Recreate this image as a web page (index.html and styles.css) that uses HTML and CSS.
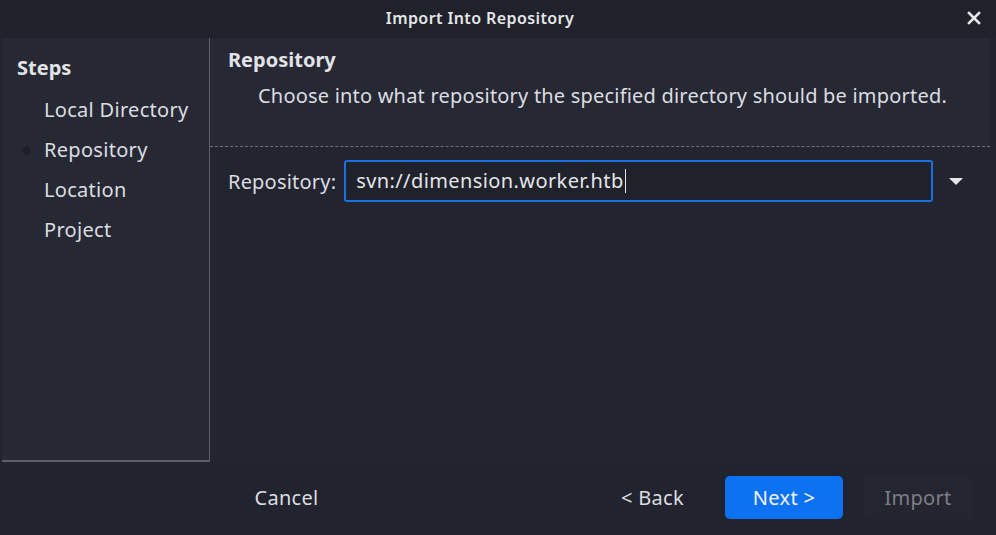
FILE: index.html
```html
<!DOCTYPE html>
<html>
<head>
<meta charset="utf-8">
<link rel="stylesheet" href="styles.css">
</head>
<body>
<div class="window">
  <div class="titlebar">
    <span class="title">Import Into Repository</span>
    <span class="close">
      <svg width="14" height="14" viewBox="0 0 14 14"><path d="M2 2 L12 12 M12 2 L2 12" stroke="#e8e8e8" stroke-width="2.6" stroke-linecap="square"/></svg>
    </span>
  </div>
  <div class="main">
    <div class="sidebar">
      <div class="steps-title">Steps</div>
      <ul class="steps">
        <li>Local Directory</li>
        <li class="current">Repository</li>
        <li>Location</li>
        <li>Project</li>
      </ul>
    </div>
    <div class="panel">
      <div class="panel-head">
        <div class="panel-title">Repository</div>
        <div class="panel-desc">Choose into what repository the specified directory should be imported.</div>
      </div>
      <div class="panel-body">
        <div class="row">
          <label class="label">Repository:</label>
          <div class="input">svn://dimension.worker.htb<span class="caret"></span></div>
          <span class="drop">
            <svg width="14" height="8" viewBox="0 0 14 8"><path d="M0 0 H14 L7 7 Z" fill="#e6e6e6"/></svg>
          </span>
        </div>
      </div>
    </div>
  </div>
  <div class="buttons">
    <button class="btn cancel">Cancel</button>
    <div class="spacer"></div>
    <button class="btn back">&lt; Back</button>
    <button class="btn next">Next &gt;</button>
    <button class="btn import">Import</button>
  </div>
</div>
</body>
</html>
```
FILE: styles.css
```css
* { box-sizing: border-box; }
html, body {
  margin: 0;
  padding: 0;
  background: #21232e;
  font-family: "Noto Sans", "Open Sans", sans-serif;
  color: #dcdde0;
}
.window {
  width: 996px;
  height: 535px;
  display: flex;
  flex-direction: column;
  background: #21232e;
}
.titlebar {
  height: 38px;
  flex: none;
  background: #1f212b;
  display: flex;
  align-items: center;
  justify-content: center;
  position: relative;
  padding-bottom: 3px;
}
.title {
  font-size: 16px;
  font-weight: 600;
  letter-spacing: 0.4px;
  color: #e6e6e6;
  margin-left: -36px;
}
.close {
  position: absolute;
  right: 15px;
  top: 11px;
  width: 14px;
  height: 14px;
  display: flex;
}
.main {
  display: flex;
  height: 424px;
  flex: none;
}
.sidebar {
  width: 208px;
  margin-left: 2px;
  background: #262934;
  border-right: 1px solid #5c5f66;
  border-bottom: 2px solid #5c5f66;
  padding: 17px 0 0 15px;
}
.steps-title {
  font-size: 20px;
  font-weight: 700;
  color: #e2e3e6;
  line-height: 26px;
}
.steps {
  list-style: none;
  margin: 9px 0 0 0;
  padding: 0 0 0 27px;
}
.steps li {
  font-size: 20px;
  letter-spacing: 0.3px;
  line-height: 40px;
  height: 40px;
  color: #dcdde0;
  position: relative;
}
.steps li.current::before {
  content: "";
  position: absolute;
  left: -21px;
  top: 16px;
  width: 8px;
  height: 9px;
  border-radius: 50%;
  background: #1d1f28;
}
.panel {
  flex: 1;
  display: flex;
  flex-direction: column;
}
.panel-head {
  height: 109px;
  background: #262834;
  padding: 8px 0 0 18px;
  border-bottom: 1px dashed #6c6f78;
  margin-right: 6px;
}
.panel-title {
  font-size: 20px;
  font-weight: 700;
  color: #e2e3e6;
  line-height: 28px;
}
.panel-desc {
  font-size: 20px;
  letter-spacing: 0.2px;
  line-height: 28px;
  margin-top: 8px;
  padding-left: 30px;
  color: #dcdde0;
}
.panel-body {
  flex: 1;
  background: #22242f;
  padding: 13px 0 0 18px;
}
.row {
  display: flex;
  align-items: center;
}
.label {
  font-size: 20px;
  letter-spacing: 0.2px;
  color: #dcdde0;
  margin-right: 8px;
}
.input {
  width: 589px;
  height: 42px;
  border: 2px solid #1b6fe4;
  border-radius: 3px;
  background: #1f212b;
  font-size: 20px;
  letter-spacing: 0.4px;
  line-height: 38px;
  padding-left: 10px;
  color: #e4e5e8;
  display: flex;
  align-items: center;
}
.caret {
  display: inline-block;
  width: 1px;
  height: 24px;
  background: #e8e8e8;
  margin-left: 1px;
}
.drop {
  margin-left: 16px;
  display: flex;
  margin-top: 2px;
}
.buttons {
  flex: 1;
  display: flex;
  align-items: flex-start;
  padding: 14px 0 0 220px;
}
.btn {
  font-family: "Noto Sans", "Open Sans", sans-serif;
  font-size: 20px;
  letter-spacing: 0.3px;
  height: 43px;
  border: none;
  background: #21232e;
  color: #dcdde0;
  border-radius: 5px;
  padding: 0;
}
.cancel { width: 133px; }
.spacer { flex: 1; }
.back { width: 135px; margin-right: 5px; }
.next {
  width: 118px;
  background: #0d72f2;
  color: #f2f4f8;
  margin-right: 20px;
}
.import {
  width: 110px;
  color: #7d7f86;
  background: #232530;
  margin-right: 23px;
}
```
